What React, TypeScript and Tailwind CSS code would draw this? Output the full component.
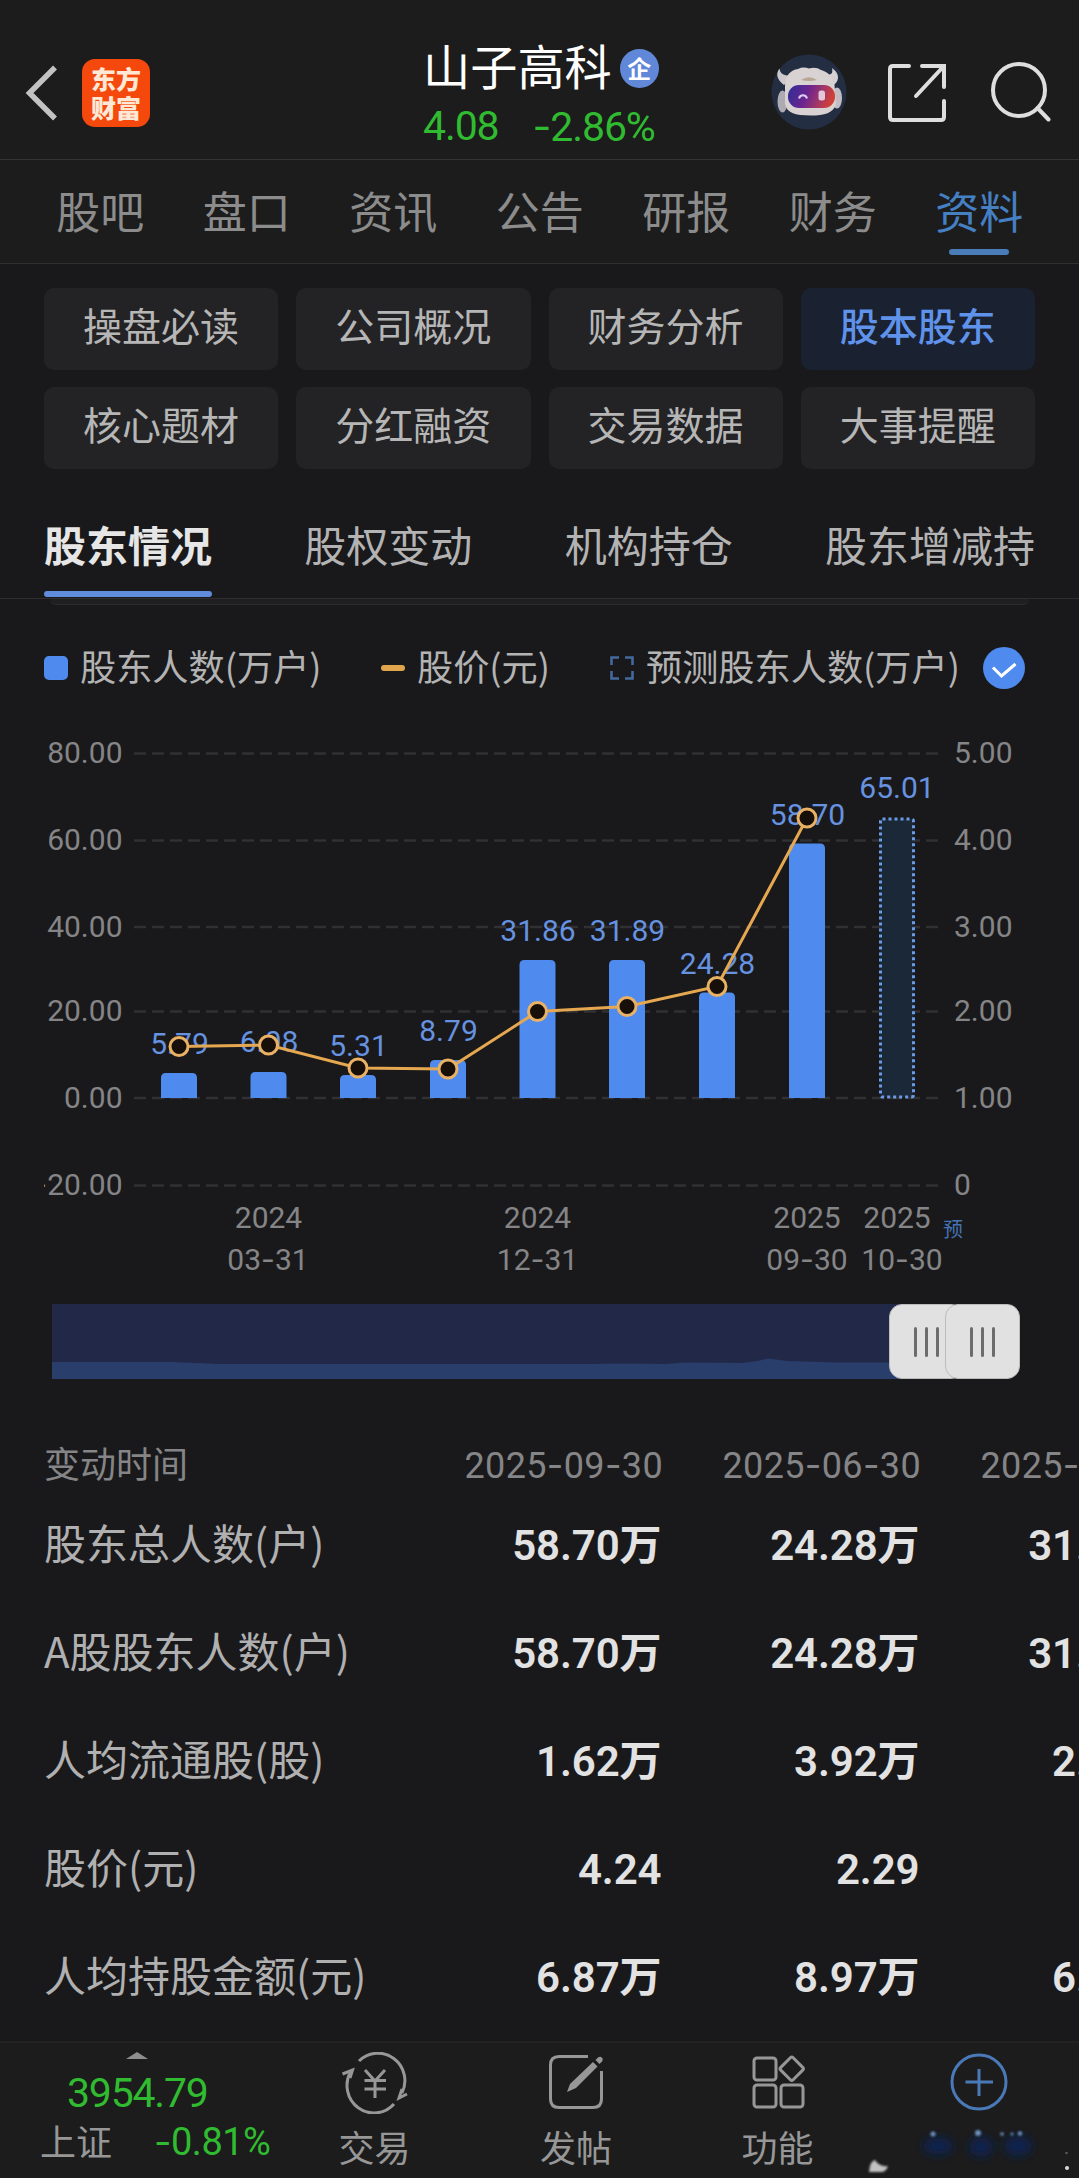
import React from "react";
import clsx from "clsx";

const mainTabs = ["股吧", "盘口", "资讯", "公告", "研报", "财务", "资料"];

const chips = [
  "操盘必读",
  "公司概况",
  "财务分析",
  "股本股东",
  "核心题材",
  "分红融资",
  "交易数据",
  "大事提醒",
];

const subTabs = ["股东情况", "股权变动", "机构持仓", "股东增减持"];

const gridLines = [
  { y: 753.5, left: "80.00", right: "5.00" },
  { y: 840.5, left: "60.00", right: "4.00" },
  { y: 927, left: "40.00", right: "3.00" },
  { y: 1011.5, left: "20.00", right: "2.00" },
  { y: 1098, left: "0.00", right: "1.00" },
  { y: 1185.5, left: "-20.00", right: "0" },
];

const points = [
  { x: 179, top: 1073, label: "5.79", labelY: 1053.5, price: 1046.5 },
  { x: 268.5, top: 1072, label: "6.08", labelY: 1051.5, price: 1045 },
  { x: 358, top: 1075, label: "5.31", labelY: 1055.5, price: 1068 },
  { x: 448, top: 1060, label: "8.79", labelY: 1040.5, price: 1069 },
  { x: 537.5, top: 960, label: "31.86", labelY: 941, price: 1011.5 },
  { x: 627, top: 960, label: "31.89", labelY: 941, price: 1006.5 },
  { x: 717, top: 992.5, label: "24.28", labelY: 973.5, price: 986.5 },
  { x: 807, top: 843.5, label: "58.70", labelY: 824.5, price: 818 },
];

const xLabels = [
  { x: 268.5, x2: 268, year: "2024", day: "03-31" },
  { x: 537.5, x2: 537.5, year: "2024", day: "12-31" },
  { x: 807, x2: 807, year: "2025", day: "09-30" },
  { x: 897, x2: 902, year: "2025", day: "10-30" },
];

const dates = ["2025-09-30", "2025-06-30", "2025-03-31"];

const rows = [
  { name: "股东总人数(户)", values: ["58.70万", "24.28万", "31.89万"] },
  { name: "A股股东人数(户)", values: ["58.70万", "24.28万", "31.89万"] },
  { name: "人均流通股(股)", values: ["1.62万", "3.92万", "2.99万"] },
  { name: "股价(元)", values: ["4.24", "2.29", "2.06"] },
  { name: "人均持股金额(元)", values: ["6.87万", "8.97万", "6.16万"] },
];

// Roboto's hyphen is too short next to the digits, Inter has a wider one
const Num = ({ text }: { text: string }) => (
  <>
    {text.split(/(-)/).map((part, i) =>
      part === "-" ? (
        <tspan key={i} className="font-['Inter']">
          -
        </tspan>
      ) : (
        part
      )
    )}
  </>
);

const Digits = ({ text, className }: { text: string; className?: string }) => (
  <span className={clsx("font-['Roboto','Noto_Sans_CJK_SC',sans-serif] whitespace-nowrap", className)}>
    {text.split(/(-)/).map((part, i) =>
      part === "-" ? (
        <span key={i} className="font-['Inter']">
          -
        </span>
      ) : (
        part
      )
    )}
  </span>
);

const Robot = () => (
  <svg width="76" height="76" viewBox="0 0 76 76">
    <defs>
      <linearGradient id="visor" x1="0" x2="1" y1="0" y2="0.2">
        <stop offset="0" stopColor="#2b2f96" />
        <stop offset="0.45" stopColor="#6a2490" />
        <stop offset="0.75" stopColor="#a0356a" />
        <stop offset="1" stopColor="#cf4038" />
      </linearGradient>
    </defs>
    <circle cx="38" cy="38" r="37.5" fill="#232e43" />
    <path d="M13 31 C5 25 5 19 8.500 14.500 C9 19 12 21.500 18 21.500 L20 24 Z" fill="#cdc8cb" />
    <path d="M63 31 C70 25 67 18 61 14 C62 19 61 21 55 21 L54 24 Z" fill="#d6d0d2" />
    <ellipse cx="11.500" cy="47.500" rx="5" ry="11" fill="#aeaab2" />
    <ellipse cx="66" cy="44" rx="5" ry="10.500" fill="#c2bdc4" />
    <path
      d="M14 32 C14 21 20 16 27 15 Q32 12.500 38 14.500 Q45 12.500 50 16 C58 18 62 24 63.500 31 L65 50 C63 59 53 61.500 40 61.500 C24 61.500 15 59 14 49 Z"
      fill="#d9d2d2"
    />
    <path d="M30 26 Q38 20.500 46 26 Q38 28 30 26 Z" fill="#b7a694" />
    <rect x="17" y="31" width="47" height="23" rx="11" fill="url(#visor)" />
    <path d="M28 44.500 C29 40 35 40 36 44.500" fill="none" stroke="#d9cdf2" strokeWidth="2" />
    <rect x="47.500" y="36.500" width="6.500" height="10" rx="2.500" fill="#e2c6da" />
  </svg>
);

const Header = () => {
  return (
    <header className="flex h-[160px] border-b border-[#343434] bg-[#1c1c1c]">
      <div className="flex w-[423px] items-center pl-[25px] pt-[26px]">
        <svg width="35" height="58" viewBox="0 0 35 58" fill="none">
          <path d="M30 3.5 L4.5 29 L30 54.5" stroke="#c2c2c2" strokeWidth="5.5" />
        </svg>
        <div className="ml-[22px] flex h-[68px] w-[68px] items-center justify-center rounded-[13px] bg-[#f4480c]">
          <p className="w-[50px] text-center text-[25px] leading-[29px] font-black text-[#ffe9d6]">东方财富</p>
        </div>
      </div>
      <div className="w-[340px] pt-[36px]">
        <div className="flex h-[58px] items-center">
          <span className="-mt-[1px] text-[47.2px] leading-[58px] text-white">山子高科</span>
          <span className="ml-[8px] mt-[7px] flex h-[39px] w-[39px] items-center justify-center rounded-full bg-[#6188d8] pb-[2px] text-[24px] leading-none font-bold text-white">
            企
          </span>
        </div>
        <div className="flex h-[66px] items-center gap-[34px] text-[41px] text-[#30bb30]">
          <Digits text="4.08" className="tracking-[-1.1px]" />
          <Digits text="-2.86%" className="tracking-[-1.1px]" />
        </div>
      </div>
      <div className="flex items-center gap-[39px] pl-[8px] pt-[25px]">
        <Robot />
        <svg width="62" height="62" viewBox="0 0 62 62" fill="none" stroke="#dedede" strokeWidth="4">
          <path d="M23 5 H7 Q4 5 4 8 V56 Q4 59 7 59 H55 Q58 59 58 56 V40" strokeLinecap="round" />
          <path d="M36 5 H58 V26" strokeLinecap="round" />
          <path d="M57 6 L30 35" strokeLinecap="round" />
        </svg>
        <svg width="64" height="64" viewBox="0 0 64 64" fill="none" stroke="#dedede" strokeWidth="4">
          <circle cx="32" cy="30" r="26" />
          <path d="M50.5 48 L61.5 59.500" strokeLinecap="round" />
        </svg>
      </div>
    </header>
  );
};

const MainTabs = () => {
  return (
    <nav className="flex h-[104px] border-b border-[#303031] bg-[#1c1c1c] px-[27px]">
      {mainTabs.map((tab) => (
        <div
          key={tab}
          className={clsx(
            "flex w-[146.5px] shrink-0 flex-col items-center text-[44px] leading-[89px] pt-[8px]",
            tab === "资料" ? "text-[#457fc4]" : "text-[#8c8c8c]"
          )}
        >
          <span className="-mt-0.5 h-[83px] whitespace-nowrap">{tab}</span>
          {tab === "资料" && <span className="h-[6px] w-[60px] rounded-full bg-[#4b7cba]" />}
        </div>
      ))}
    </nav>
  );
};

const Chips = () => {
  return (
    <div className="grid grid-cols-4 gap-x-[18px] gap-y-[17px] px-[44px] pt-[24px]">
      {chips.map((chip) => (
        <div
          key={chip}
          className={clsx(
            "flex h-[82px] items-center justify-center rounded-[10px] pb-[9px] text-[39px] leading-none",
            chip === "股本股东"
              ? "bg-[#1a2130] font-medium text-[#5f92ea]"
              : "bg-[#232325] text-[#b6b6b6]"
          )}
        >
          {chip}
        </div>
      ))}
    </div>
  );
};

const SubTabs = () => {
  return (
    <div className="mt-[24px] h-[106px] border-b border-[#2e2e30] px-[44px]">
      <div className="flex justify-between text-[42px] leading-[102px]">
        {subTabs.map((tab, i) => (
          <div key={tab} className={i === 0 ? "font-bold text-[#e6e6e6]" : "text-[#b3b3b3]"}>
            <div className="h-[98px]">{tab}</div>
            {i === 0 && <div className="h-[6px] rounded-full bg-[#5f8cdb]" />}
          </div>
        ))}
      </div>
    </div>
  );
};

const Legend = () => {
  return (
    <div className="flex h-[60px] items-center px-[44px] text-[36.2px] leading-[60px] whitespace-nowrap text-[#b3b3b3]">
      <span className="h-[24px] w-[24px] rounded-[5px] bg-[#4f8bee]" />
      <span className="ml-[12px] -mt-[6px] w-[301px]">股东人数(万户)</span>
      <span className="h-[6px] w-[24px] rounded-full bg-[#e0a44c]" />
      <span className="ml-[12px] -mt-[6px] w-[193px]">股价(元)</span>
      <svg width="24" height="24" viewBox="0 0 24 24" fill="none" stroke="#44699f" strokeWidth="2.6">
        <path d="M1.5 9 V1.5 H9 M15 1.5 H22.5 V9 M22.5 15 V22.5 H15 M9 22.5 H1.5 V15" />
      </svg>
      <span className="ml-[12px] -mt-[6px] w-[337px]">预测股东人数(万户)</span>
      <svg width="42" height="42" viewBox="0 0 42 42">
        <circle cx="21" cy="21" r="21" fill="#4f8bee" />
        <path d="M10 20.500 L18.500 29 L32.500 17" fill="none" stroke="#fff" strokeWidth="3" />
      </svg>
    </div>
  );
};

const Chart = () => {
  return (
    <svg
      className="ml-[44px] block overflow-hidden font-['Roboto','Noto_Sans_CJK_SC',sans-serif]"
      width="991"
      height="590"
      viewBox="44 710 991 590"
      fontSize="30"
    >
      {gridLines.map((line) => (
        <g key={line.y} fill="#858587">
          <line
            x1="134"
            x2="940"
            y1={line.y}
            y2={line.y}
            stroke="#313133"
            strokeWidth="2.4"
            strokeDasharray="12 6"
          />
          <text x="122.5" y={line.y + 9.5} textAnchor="end">
            <Num text={line.left} />
          </text>
          <text x="954" y={line.y + 9.5}>
            {line.right}
          </text>
        </g>
      ))}

      {points.map((p) => (
        <g key={p.x}>
          <path
            d={`M${p.x - 18} 1098 V${p.top + 5} q0 -5 5 -5 H${p.x + 13} q5 0 5 5 V1098 Z`}
            fill="#4f8bee"
          />
          <text x={p.x + 0.5} y={p.labelY} textAnchor="middle" fill="#6692e0">
            {p.label}
          </text>
        </g>
      ))}

      {/* forecast */}
      <rect
        x="880.5"
        y="819"
        width="33"
        height="278"
        rx="2"
        fill="#1b2838"
        stroke="#6d9ae6"
        strokeWidth="3"
        strokeDasharray="3 3"
      />
      <text x="897" y="798" textAnchor="middle" fill="#6692e0">
        65.01
      </text>

      <polyline
        points={points.map((p) => `${p.x},${p.price}`).join(" ")}
        fill="none"
        stroke="#e5a750"
        strokeWidth="3"
      />
      {points.map((p) => (
        <circle key={p.x} cx={p.x} cy={p.price} r="9" fill="#170f0a" stroke="#e9b163" strokeWidth="3" />
      ))}

      {xLabels.map((l) => (
        <g key={l.x} fill="#858587" textAnchor="middle">
          <text x={l.x} y="1228">
            {l.year}
          </text>
          <text x={l.x2} y="1270">
            <Num text={l.day} />
          </text>
        </g>
      ))}
      <text x="943" y="1236.5" fontSize="20" fill="#4373b4">
        预
      </text>
    </svg>
  );
};

const Handle = ({ className }: { className?: string }) => (
  <div
    className={clsx(
      "flex h-[75px] w-[75px] items-center justify-center gap-[7.5px] rounded-[13px] border border-[#bcbcbc] bg-[#e1e1e1]",
      className
    )}
  >
    <span className="h-[30px] w-[3.5px] rounded-full bg-[#6c6c6c]" />
    <span className="h-[30px] w-[3.5px] rounded-full bg-[#6c6c6c]" />
    <span className="h-[30px] w-[3.5px] rounded-full bg-[#6c6c6c]" />
  </div>
);

const RangeSlider = () => {
  return (
    <div className="mt-[4px] flex h-[75px] pl-[52px]">
      <svg width="850" height="75" viewBox="0 0 850 75" className="-mr-[13px] shrink-0">
        <rect width="850" height="75" fill="#222948" />
        <path
          d="M0 58 H120 L165 60 H540 L570 59.5 L615 60 L632 58.5 L690 59 L706 57 L716 54.5 L735 57 L785 58.5 H850 V75 H0 Z"
          fill="#2a3e6b"
        />
      </svg>
      <Handle />
      <Handle className="-ml-[19px]" />
    </div>
  );
};

const Table = () => {
  return (
    <div className="mt-[60px] overflow-hidden pl-[44px]">
      <div className="flex h-[52px] items-center text-[36px] text-[#858587]">
        <span className="-mt-[6px] w-[361px] shrink-0">变动时间</span>
        {dates.map((date) => (
          <Digits key={date} text={date} className="w-[258px] shrink-0 text-right tracking-[0.35px]" />
        ))}
      </div>
      {rows.map((row) => (
        <div key={row.name} className="flex h-[108px] items-center text-[42px]">
          <span className="-mt-[7px] w-[359.5px] shrink-0 whitespace-nowrap text-[#b0b0b1]">{row.name}</span>
          {row.values.map((value, i) => (
            <Digits
              key={i}
              text={value}
              className="w-[258px] shrink-0 text-right font-semibold tracking-[-0.1px] text-[#e2e2e3]"
            />
          ))}
        </div>
      ))}
    </div>
  );
};

const BottomBar = () => {
  return (
    <footer className="flex h-[137px] border-t-2 border-[#222223] bg-[#1c1c1c] text-[36px] leading-none text-[#979797]">
      <div className="flex w-[302px] flex-col pt-[9px]">
        <svg width="22" height="7" viewBox="0 0 22 7" className="ml-[126px]">
          <path d="M11 0 L22 7 H0 Z" fill="#8e8e8e" />
        </svg>
        <Digits text="3954.79" className="mt-[14px] pl-[67px] text-[41px] leading-[41px] tracking-[-1.2px] text-[#30bb30]" />
        <div className="mt-[7px] flex h-[40px] items-center pl-[40px]">
          <span className="-mt-[3px]">上证</span>
          <Digits text="-0.81%" className="ml-[42px] text-[38px] tracking-[-0.5px] text-[#30bb30]" />
        </div>
      </div>
      <div className="flex w-[145px] flex-col items-center pt-[9px]">
        <svg width="68" height="62" viewBox="0 0 68 62" fill="none" stroke="#979797" strokeWidth="3">
          <path d="M18 9 A27 27.500 0 0 1 61 41" />
          <path d="M53 52 A27 27.500 0 0 1 9.500 20" />
          <path d="M1.500 22 L11.500 18 L9 26" />
          <path d="M66 42 L58 46 L61 37" />
          <path d="M24 18 L34 29 L44 18 M23.500 28.500 H45 M23.500 37 H45 M34 28 V46" />
        </svg>
        <span className="mt-[14px]">交易</span>
      </div>
      <div className="flex w-[258px] flex-col items-center pt-[8px]">
        <svg width="62" height="62" viewBox="0 0 62 62" fill="none" stroke="#979797" strokeWidth="3">
          <path d="M43 5.5 H14 Q5.500 5.500 5.500 14 V48 Q5.500 56.500 14 56.500 H48 Q56.500 56.500 56.500 48 V20" />
          <path d="M48 11 L52.500 15.500 L31 37 L22 41 L25 33 Z" fill="#979797" stroke="none" />
          <path d="M50.500 9 L53 6.500 Q56 4.500 57.500 7.500 Q58 9.500 57 10.500 L54.500 13 Z" fill="#979797" stroke="none" />
        </svg>
        <span className="mt-[15px]">发帖</span>
      </div>
      <div className="flex w-[145px] flex-col items-center pt-[8px]">
        <svg width="62" height="62" viewBox="0 0 62 62" fill="none" stroke="#979797" strokeWidth="3">
          <rect x="7" y="7" width="22" height="22" rx="3" />
          <rect x="7" y="34" width="22" height="22" rx="3" />
          <rect x="34" y="34" width="22" height="22" rx="3" />
          <rect x="36" y="9" width="17.500" height="17.500" rx="2" transform="rotate(45 44.750 17.750)" />
        </svg>
        <span className="mt-[15px]">功能</span>
      </div>
      <svg width="229" height="135" viewBox="850 2043 229 135">
        <defs>
          <filter id="soft" x="-50%" y="-50%" width="200%" height="200%">
            <feGaussianBlur stdDeviation="5" />
          </filter>
          <filter id="spot" x="-50%" y="-50%" width="200%" height="200%">
            <feGaussianBlur stdDeviation="1.2" />
          </filter>
        </defs>
        <circle cx="979" cy="2082" r="27" fill="none" stroke="#4a79b8" strokeWidth="3" />
        <path d="M965.500 2082 H993 M979 2069 V2096" stroke="#4a79b8" strokeWidth="3" />
        {/* faded label */}
        <g fill="#0a2450" filter="url(#soft)">
          <ellipse cx="938" cy="2146" rx="15" ry="9" />
          <ellipse cx="981" cy="2147" rx="12" ry="10" />
          <ellipse cx="1018" cy="2146" rx="14" ry="10" />
        </g>
        <g fill="#6d8fbe" filter="url(#spot)">
          <circle cx="933" cy="2134" r="2.500" />
          <circle cx="978" cy="2133" r="3" />
          <circle cx="1002" cy="2134" r="1.800" />
          <circle cx="1012" cy="2134" r="1.500" />
          <circle cx="1020" cy="2133.500" r="2.200" />
        </g>
        <path d="M869 2172 Q870 2161 875 2160 Q879 2167 888 2166 Q886 2172 881 2172 Z" fill="#c2c2c2" filter="url(#spot)" />
        <circle cx="1067" cy="2168" r="2" fill="#dadada" />
        <circle cx="1066.500" cy="2153" r="1.200" fill="#5e5e5e" />
      </svg>
    </footer>
  );
};

const App = () => {
  return (
    <div className="flex h-[2184px] w-[1079px] flex-col overflow-hidden bg-white font-['Noto_Sans_CJK_SC',sans-serif]">
      <div className="flex h-[2178px] flex-col bg-[#19191b]">
        <Header />
        <MainTabs />
        <Chips />
        <SubTabs />
        <div className="mx-[50px] h-[6px] rounded-b-[12px] border-b border-[#2b2b2d] bg-[#1f1f21]" />
        <div className="mt-[33px]">
          <Legend />
        </div>
        <div className="mt-[12px]">
          <Chart />
        </div>
        <RangeSlider />
        <Table />
        <div className="mt-auto">
          <BottomBar />
        </div>
      </div>
    </div>
  );
};

export default App;
